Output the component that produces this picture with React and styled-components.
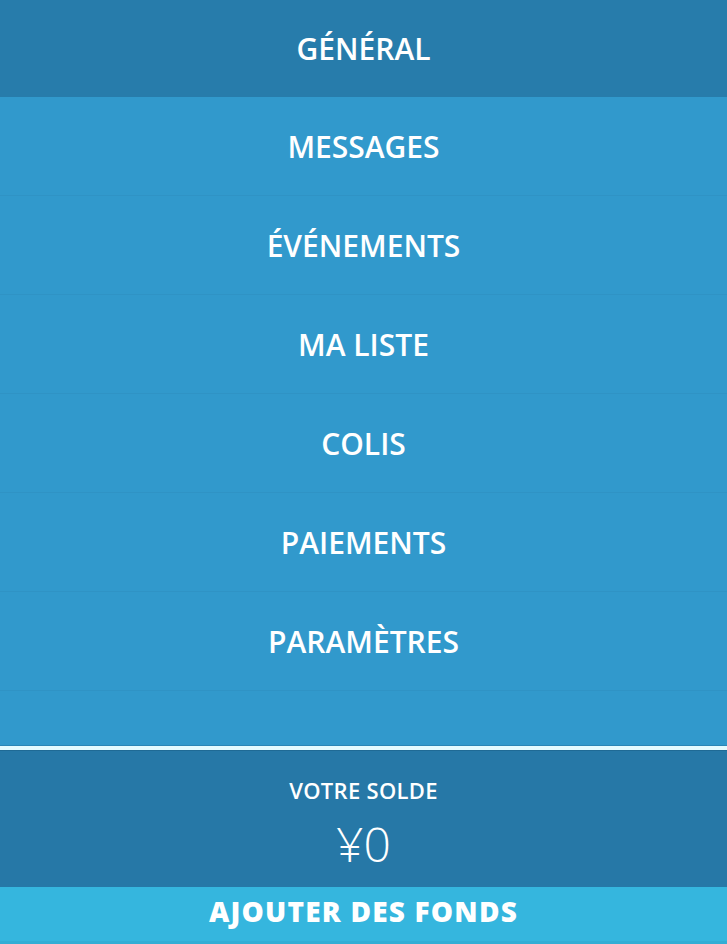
import React from 'react';
import styled, { createGlobalStyle } from 'styled-components';

const GlobalStyle = createGlobalStyle`
  html, body {
    margin: 0;
    padding: 0;
  }
  body {
    font-family: 'Open Sans', 'Liberation Sans', sans-serif;
    background: #3199cc;
  }
`;

const Page = styled.div`
  display: flex;
  flex-direction: column;
  height: 100vh;
  min-height: 944px;
`;

const Menu = styled.nav`
  flex: 1;
  display: flex;
  flex-direction: column;
  background: #3199cc;
`;

const Item = styled.a`
  display: flex;
  align-items: center;
  justify-content: center;
  height: ${props => (props.active ? '97px' : '98px')};
  border-bottom: ${props => (props.active ? 'none' : '1px solid #2f93c5')};
  background: ${props => (props.active ? '#277cab' : '#3199cc')};
  color: #fff;
  font-size: 30px;
  font-weight: 600;
  text-transform: uppercase;
  text-decoration: none;
  cursor: pointer;
`;

const Balance = styled.div`
  display: flex;
  flex-direction: column;
  align-items: center;
  background: #2678a7;
  border-top: 1px solid #2b86b6;
  box-shadow: inset 0 4px 0 #e4fbff, inset 0 5px 0 #1f6a95;
  padding-top: 29px;
  height: 142px;
  box-sizing: border-box;
  color: #fff;
`;

const Label = styled.p`
  margin: 0;
  font-size: 22px;
  font-weight: 600;
  letter-spacing: 0.3px;
  line-height: 30px;
`;

const Amount = styled.p`
  margin: 12px 0 0;
  font-size: 48px;
  font-weight: 300;
  line-height: 54px;
`;

const Button = styled.a`
  display: flex;
  align-items: center;
  justify-content: center;
  height: 57px;
  padding-bottom: 6px;
  background: #35b6de;
  border-bottom: 3px solid #33aed5;
  box-sizing: border-box;
  color: #fff;
  font-size: 28px;
  font-weight: 800;
  letter-spacing: 1.2px;
  text-decoration: none;
  cursor: pointer;
`;

const items = ['Général', 'Messages', 'Événements', 'Ma liste', 'Colis', 'Paiements', 'Paramètres'];

export default function App() {
  return (
    <>
      <GlobalStyle />
      <Page>
        <Menu>
          {items.map((item, index) => (
            <Item key={item} active={index === 0}>{item}</Item>
          ))}
        </Menu>
        <Balance>
          <Label>VOTRE SOLDE</Label>
          <Amount>¥0</Amount>
        </Balance>
        <Button>AJOUTER DES FONDS</Button>
      </Page>
    </>
  );
}
